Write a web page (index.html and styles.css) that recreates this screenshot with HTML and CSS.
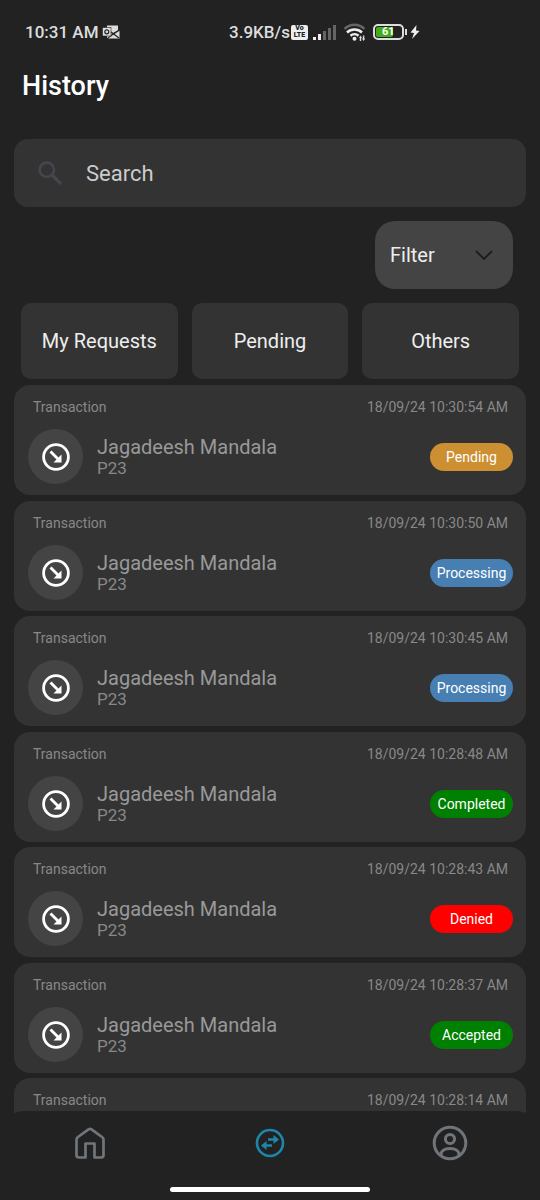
FILE: index.html
```
<!DOCTYPE html>
<html lang="en">
<head>
<meta charset="utf-8">
<meta name="viewport" content="width=device-width, initial-scale=1">
<title>History</title>
<link rel="stylesheet" href="styles.css">
</head>
<body>
<svg class="sprite" aria-hidden="true">
  <symbol id="arrow" viewBox="0 0 28 28">
    <circle cx="14" cy="14" r="12.4" fill="none" stroke="currentColor" stroke-width="2.800"/>
    <path d="M8.500 8.500l8 8" fill="none" stroke="currentColor" stroke-width="2.900"/>
    <path d="M19.500 11.500v8h-8z" fill="currentColor"/>
  </symbol>
</svg>
<div class="status-bar">
  <div class="status-left">
    <span>10:31 AM</span>
    <svg class="mail-icon" viewBox="0 0 18 14" aria-hidden="true">
      <path d="M5 .5h11v5L5 13z" fill="#ddd"/>
      <path d="M17.500 5.500v8H6z" fill="#ddd"/>
      <path d="M9 7l8 6M17.500 5l-8 4.500" stroke="#222" stroke-width="1.200"/>
      <rect x=".5" y="2.500" width="8.500" height="8.500" fill="#ddd" stroke="#222" stroke-width=".6"/>
      <circle cx="4.800" cy="6.800" r="2" fill="none" stroke="#222" stroke-width="1.200"/>
    </svg>
  </div>
  <div class="status-right">
    <span>3.9KB/s</span>
    <span class="volte"><span>Vo</span><span>LTE</span></span>
    <svg class="signal-icon" viewBox="0 0 26 17" aria-hidden="true">
      <path d="M1 13h3v3H1zM6 10h3v6H6z" fill="#eee"/>
      <path d="M11 7h3v9h-3zM16 4h3v12h-3zM21 1h3v15h-3z" fill="#656565"/>
    </svg>
    <svg class="wifi-icon" viewBox="0 0 24 19" aria-hidden="true">
      <path d="M1.500 6a14 14 0 0 1 20 0" fill="none" stroke="#666" stroke-width="2.500"/>
      <path d="M4 9.500a11 11 0 0 1 15 0M7.500 12.700a6 6 0 0 1 8 0" fill="none" stroke="#eee" stroke-width="2.500"/>
      <circle cx="11.500" cy="15.800" r="2" fill="#eee"/>
      <path d="M16 15l1.500-2.500L19 15h-.8v3h-1.400v-3zM19 15.500h.9v-3h1.400v3h.9L20.600 18z" fill="#ddd"/>
    </svg>
    <span class="battery"><span class="battery-level">61</span></span>
    <svg class="bolt-icon" viewBox="0 0 10 16" aria-hidden="true"><path d="M6.500 1L.5 8.500l3.500.5-2 6L9.500 7 6 6.500z" fill="#eee"/></svg>
  </div>
</div>
<header class="page-header"><h1>History</h1></header>
<main class="content">
  <label class="search">
    <svg class="search-icon" viewBox="0 0 24 24" aria-hidden="true">
      <circle cx="8.800" cy="8.800" r="7.200" fill="none" stroke="currentColor" stroke-width="2.600"/>
      <path d="M14 14l9 9" stroke="currentColor" stroke-width="3.200"/>
    </svg>
    <input type="search" placeholder="Search" aria-label="Search">
  </label>
  <div class="filter">
    <select aria-label="Filter"><option>Filter</option></select>
    <svg class="chevron" viewBox="0 0 18 12" aria-hidden="true"><path d="M1 2l8 8 8-8" fill="none" stroke="currentColor" stroke-width="1.800"/></svg>
  </div>
  <div class="tabs">
    <button type="button">My Requests</button>
    <button type="button">Pending</button>
    <button type="button">Others</button>
  </div>
  <ul class="transactions">
    <li class="card">
      <div class="meta"><span>Transaction</span><time>18/09/24 10:30:54 AM</time></div>
      <div class="detail"><span class="avatar"><svg><use href="#arrow"/></svg></span><div class="person"><span class="name">Jagadeesh Mandala</span><span class="code">P23</span></div><span class="badge pending">Pending</span></div>
    </li>
    <li class="card">
      <div class="meta"><span>Transaction</span><time>18/09/24 10:30:50 AM</time></div>
      <div class="detail"><span class="avatar"><svg><use href="#arrow"/></svg></span><div class="person"><span class="name">Jagadeesh Mandala</span><span class="code">P23</span></div><span class="badge processing">Processing</span></div>
    </li>
    <li class="card">
      <div class="meta"><span>Transaction</span><time>18/09/24 10:30:45 AM</time></div>
      <div class="detail"><span class="avatar"><svg><use href="#arrow"/></svg></span><div class="person"><span class="name">Jagadeesh Mandala</span><span class="code">P23</span></div><span class="badge processing">Processing</span></div>
    </li>
    <li class="card">
      <div class="meta"><span>Transaction</span><time>18/09/24 10:28:48 AM</time></div>
      <div class="detail"><span class="avatar"><svg><use href="#arrow"/></svg></span><div class="person"><span class="name">Jagadeesh Mandala</span><span class="code">P23</span></div><span class="badge success">Completed</span></div>
    </li>
    <li class="card">
      <div class="meta"><span>Transaction</span><time>18/09/24 10:28:43 AM</time></div>
      <div class="detail"><span class="avatar"><svg><use href="#arrow"/></svg></span><div class="person"><span class="name">Jagadeesh Mandala</span><span class="code">P23</span></div><span class="badge denied">Denied</span></div>
    </li>
    <li class="card">
      <div class="meta"><span>Transaction</span><time>18/09/24 10:28:37 AM</time></div>
      <div class="detail"><span class="avatar"><svg><use href="#arrow"/></svg></span><div class="person"><span class="name">Jagadeesh Mandala</span><span class="code">P23</span></div><span class="badge success">Accepted</span></div>
    </li>
    <li class="card">
      <div class="meta"><span>Transaction</span><time>18/09/24 10:28:14 AM</time></div>
    </li>
  </ul>
</main>
<nav class="bottom-nav" aria-label="Main">
  <div class="nav-links">
    <a href="#home" aria-label="Home"><svg width="32" height="32" viewBox="0 0 32 32" fill="none" stroke="currentColor" stroke-width="2.700" stroke-linejoin="round"><path d="M2.500 12.500Q2.500 11 4 10L14.500 2.300Q16 1.300 17.500 2.300L28 10Q29.500 11 29.500 12.500V28Q29.500 30.500 27 30.500H20.500V16.500H11.500V30.500H5Q2.500 30.500 2.500 28Z"/></svg></a>
    <a href="#history" class="active" aria-label="History" aria-current="page"><svg width="30" height="30" viewBox="0 0 30 30" fill="none" stroke="currentColor" stroke-width="2.600"><circle cx="15" cy="15" r="13"/><path d="M13 11.500h7M17 17.500h-7" stroke-width="2.600"/><path d="M18.500 7l5.500 4.500-5.500 4.500zM11.500 13L6 17.500l5.500 4.500z" fill="currentColor" stroke="none"/></svg></a>
    <a href="#profile" aria-label="Profile"><svg width="36" height="36" viewBox="0 0 36 36" fill="none" stroke="currentColor" stroke-width="3"><circle cx="18" cy="18" r="15.800"/><circle cx="18" cy="14" r="4.600"/><path d="M9 31v-1.500c0-3.500 3.500-6 9-6s9 2.500 9 6V31"/></svg></a>
  </div>
  <div class="gesture-bar"></div>
</nav>
</body>
</html>
```
FILE: styles.css
```
* { box-sizing: border-box; }
body {
  margin: 0;
  height: 100vh;
  overflow: hidden;
  background: #222;
  color: #eee;
  font-family: Roboto, "Noto Sans", sans-serif;
}
button, input, select { font: inherit; color: inherit; border: 0; }
.sprite { display: none; }
.status-bar {
  display: grid;
  grid-template-columns: 204px 1fr;
  align-items: center;
  height: 64px;
  padding-left: 25px;
  font-size: 17px;
  font-weight: 500;
  color: #ddd;
}
.status-left, .status-right { display: flex; align-items: center; }
.status-left { gap: 3px; }
.mail-icon { width: 18px; height: 14px; }
.volte {
  display: flex;
  flex-direction: column;
  align-items: center;
  justify-content: center;
  width: 17px;
  height: 15px;
  margin-left: 1px;
  border-radius: 2px;
  background: #eee;
  color: #222;
  font-size: 7px;
  font-weight: 900;
  line-height: 7px;
}
.signal-icon { width: 26px; height: 17px; margin-left: 4px; }
.wifi-icon { width: 24px; height: 19px; margin-left: 5px; }
.battery {
  display: flex;
  position: relative;
  width: 31px;
  height: 16px;
  margin-left: 6px;
  padding: 1px;
  border: 2px solid #ddd;
  border-radius: 5px;
  background: #222;
}
.battery::after {
  content: "";
  position: absolute;
  right: -5px;
  top: 3px;
  width: 2px;
  height: 6px;
  background: #ddd;
}
.battery-level {
  width: 17px;
  padding-left: 6px;
  border-radius: 2px;
  background: #43ad17;
  color: #fff;
  font-size: 11px;
  font-weight: 700;
  line-height: 10px;
}
.bolt-icon { width: 10px; height: 16px; margin-left: 6px; }
.page-header { padding: 4px 22px 0; }
h1 { margin: 0; color: #fff; font-size: 27px; font-weight: 500; line-height: 36px; }
.content { padding: 35px 14px 0; }
.search {
  display: flex;
  align-items: center;
  gap: 24px;
  height: 68px;
  padding: 0 24px;
  border-radius: 14px;
  background: #333;
}
.search-icon { width: 24px; height: 24px; color: #45454c; }
.search input { flex: 1; min-width: 0; padding: 0; background: transparent; outline: 0; font-size: 22px; }
.search input::placeholder { color: #ccc; opacity: 1; }
.filter {
  display: grid;
  align-items: center;
  width: 138px;
  height: 68px;
  margin: 14px 13px 0 auto;
  border-radius: 20px;
  background: #444;
}
.filter select {
  grid-area: 1 / 1;
  width: 100%;
  height: 100%;
  padding: 0 15px;
  border-radius: 20px;
  background: transparent;
  appearance: none;
  font-size: 20px;
}
.chevron { grid-area: 1 / 1; justify-self: end; width: 18px; height: 12px; margin-right: 20px; color: #1c1c1c; pointer-events: none; }
.tabs { display: flex; gap: 14px; padding: 14px 7px 6px; }
.tabs button { flex: 1; height: 76px; padding: 0; border-radius: 10px; background: #333; font-size: 20px; }
.transactions { margin: 0; padding: 0; list-style: none; }
.card {
  height: 110px;
  margin-bottom: 5px;
  padding: 13px 13px 0 14px;
  border-radius: 16px;
  background: #333;
}
.card:nth-child(odd) { margin-bottom: 6px; }
.meta {
  display: flex;
  justify-content: space-between;
  padding: 0 5px;
  color: #888;
  font-size: 14px;
  line-height: 18px;
}
.detail { display: flex; align-items: center; margin-top: 13px; }
.avatar {
  display: grid;
  place-items: center;
  width: 55px;
  height: 55px;
  border-radius: 50%;
  background: #444;
  color: #fff;
}
.avatar svg { width: 28px; height: 28px; }
.person { display: flex; flex: 1; flex-direction: column; margin-left: 14px; padding-bottom: 2px; color: #999; }
.name { font-size: 20px; line-height: 24px; }
.code { color: #888; font-size: 17px; line-height: 18px; }
.badge {
  width: 83px;
  border-radius: 14px;
  color: #fff;
  font-size: 14px;
  line-height: 28px;
  text-align: center;
}
.pending { background: #cc9033; }
.processing { background: #477fb3; }
.success { background: #008000; }
.denied { background: #f00; }
.bottom-nav {
  position: fixed;
  inset: auto 0 0;
  padding-bottom: 8px;
  border-radius: 24px 24px 0 0;
  background: #222;
}
.nav-links { display: grid; grid-template-columns: repeat(3, 1fr); height: 76px; padding-bottom: 12px; }
.nav-links a { display: grid; place-items: center; color: #70757a; }
.nav-links .active { color: #1d86a9; }
.gesture-bar { width: 200px; max-width: 50%; height: 5px; margin: 0 auto; border-radius: 3px; background: #fff; }
```
